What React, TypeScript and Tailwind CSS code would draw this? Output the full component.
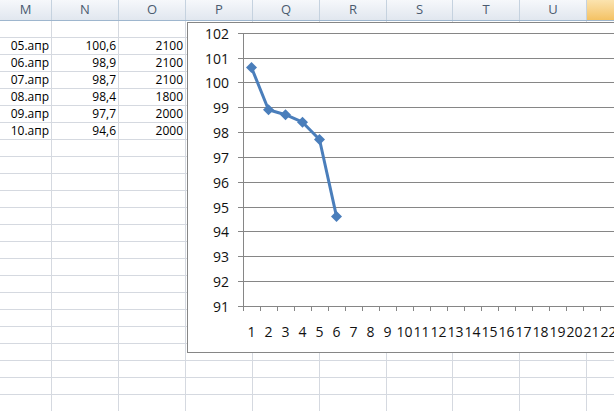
import React from "react"

const cols = [
  { name: "M", w: "w-[52px]" },
  { name: "N", w: "w-[67px]" },
  { name: "O", w: "w-[67px]" },
  { name: "P", w: "w-[67px]" },
  { name: "Q", w: "w-[67px]" },
  { name: "R", w: "w-[67px]" },
  { name: "S", w: "w-[66px]" },
  { name: "T", w: "w-[67px]" },
  { name: "U", w: "w-[67px]" },
  { name: "V", w: "w-[67px]" },
]

const data = [
  ["05.апр", "100,6", "2100"],
  ["06.апр", "98,9", "2100"],
  ["07.апр", "98,7", "2100"],
  ["08.апр", "98,4", "1800"],
  ["09.апр", "97,7", "2000"],
  ["10.апр", "94,6", "2000"],
]

const values = [100.6, 98.9, 98.7, 98.4, 97.7, 94.6]

const yOf = (v: number) => 305.7 - (v - 91) * 24.8
const xOf = (n: number) => 234.5 + 17 * n

const Chart = () => {
  const ticks = Array.from({ length: 12 }, (_, i) => 91 + i)
  const cats = Array.from({ length: 22 }, (_, i) => i + 1)
  const pts = values.map((v, i) => [xOf(i + 1), yOf(v)])
  return (
    <div className="absolute left-[187px] top-[22px] w-[460px] h-[331px] border border-[#868686] bg-white">
      <svg
        width={458}
        height={329}
        viewBox="188 23 458 329"
        className="block"
        style={{ fontFamily: '"Open Sans", sans-serif' }}
      >
        {ticks.map((t) => {
          const y = Math.round(yOf(t)) + 0.5
          return (
            <g key={t}>
              <line x1={238} x2={646} y1={y} y2={y} stroke="#868686" strokeWidth={1} />
              <text x={229} y={y + 5} textAnchor="end" fontSize={14} fill="#111">
                {t}
              </text>
            </g>
          )
        })}
        <line x1={243.5} x2={243.5} y1={33} y2={306} stroke="#868686" strokeWidth={1} />
        {Array.from({ length: 25 }, (_, k) => (
          <line
            key={k}
            x1={243.5 + 17 * k}
            x2={243.5 + 17 * k}
            y1={306}
            y2={311}
            stroke="#868686"
            strokeWidth={1}
          />
        ))}
        {cats.map((n) => (
          <text key={n} x={xOf(n)} y={337} textAnchor="middle" fontSize={14} fill="#111">
            {n}
          </text>
        ))}
        <polyline
          points={pts.map((p) => p.join(",")).join(" ")}
          fill="none"
          stroke="#4a7ebb"
          strokeWidth={3}
          strokeLinejoin="round"
        />
        {pts.map(([x, y], i) => (
          <polygon
            key={i}
            points={`${x},${y - 5.5} ${x + 5.5},${y} ${x},${y + 5.5} ${x - 5.5},${y}`}
            fill="#4a7ebb"
          />
        ))}
      </svg>
    </div>
  )
}

const App = () => {
  const rows = Array.from({ length: 24 }, (_, i) => i)
  return (
    <div className="relative w-[614px] h-[411px] overflow-hidden bg-white font-['Open_Sans',sans-serif]">
      <div className="flex h-[21px] border-b border-[#9eb6ce]">
        {cols.map((c, i) => (
          <div
            key={c.name}
            className={`${c.w} shrink-0 flex items-center justify-center text-[13px] border-r ${
              i === cols.length - 1
                ? "bg-gradient-to-b from-[#fbe3ae] to-[#f4c263] border-[#e0b35a] text-[#333]"
                : "bg-gradient-to-b from-[#f6f8fb] to-[#e1e7ef] border-[#c5d2df] text-[#4b5b70]"
            }`}
          >
            {i === cols.length - 1 ? "" : c.name}
          </div>
        ))}
      </div>
      {rows.map((r) => (
        <div key={r} className="flex h-[17px]">
          {cols.map((c, i) => {
            const cell = r >= 1 && r <= 6 && i < 3 ? data[r - 1][i] : ""
            return (
              <div
                key={c.name}
                className={`${c.w} shrink-0 border-r border-b border-[#d5d9e0] flex items-center justify-end pr-[2px] text-[12px] text-black leading-none`}
              >
                {cell}
              </div>
            )
          })}
        </div>
      ))}
      <Chart />
    </div>
  )
}

export default App
